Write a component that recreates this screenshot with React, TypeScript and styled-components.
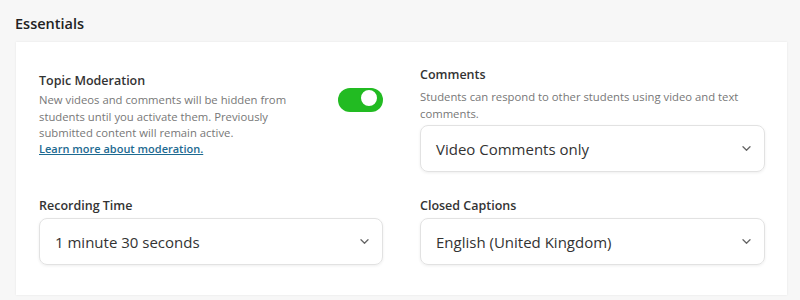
import React, { useState } from "react";
import styled, { createGlobalStyle } from "styled-components";

const GlobalStyle = createGlobalStyle`
  html, body {
    margin: 0;
    padding: 0;
    background: #f7f7f7;
    font-family: "Open Sans", "Liberation Sans", sans-serif;
  }
`;

const Page = styled.div`
  width: 800px;
  height: 300px;
  overflow: hidden;
  padding: 14px 0 0 15px;
  box-sizing: border-box;
`;

const SectionTitle = styled.h2`
  margin: 0 0 8px;
  font-size: 14.5px;
  font-weight: 600;
  color: #222;
  line-height: 20px;
`;

const Card = styled.div`
  width: 771px;
  margin-left: 1px;
  background: #fff;
  box-shadow: 0 0 2px rgba(0, 0, 0, 0.08);
  padding: 24px 22px 30px 23px;
  box-sizing: border-box;
  display: grid;
  grid-template-columns: 344px 345px;
  column-gap: 37px;
  row-gap: 25px;
`;

const Field = styled.div<{ $offset?: number }>`
  display: flex;
  flex-direction: column;
  padding-top: ${(p) => p.$offset ?? 0}px;
`;

const ToggleRow = styled.div`
  display: flex;
  align-items: flex-start;
  justify-content: space-between;
`;

const TextBlock = styled.div`
  width: 285px;
`;

const Label = styled.div`
  font-size: 12.5px;
  font-weight: 600;
  color: #333;
  line-height: 18px;
`;

const Description = styled.p<{ $top?: number }>`
  margin: ${(p) => p.$top ?? 2}px 0 0;
  font-size: 11.3px;
  line-height: 16.5px;
  color: #777;
`;

const HelpLink = styled.a`
  display: block;
  margin-top: -1px;
  font-size: 11px;
  font-weight: 600;
  line-height: 16px;
  color: #1d6a91;
  text-decoration: underline;
  cursor: pointer;
`;

const Switch = styled.button<{ $on: boolean }>`
  position: relative;
  margin-top: 16px;
  width: 45px;
  height: 24px;
  border-radius: 12px;
  border: none;
  padding: 0;
  background: ${(p) => (p.$on ? "#22bb22" : "#ccc")};
  cursor: pointer;

  &::after {
    content: "";
    position: absolute;
    top: 2px;
    left: ${(p) => (p.$on ? "23px" : "2px")};
    width: 16px;
    height: 16px;
    border-radius: 50%;
    background: #fff;
    border: 2px solid ${(p) => (p.$on ? "#22bb22" : "#ccc")};
    box-sizing: content-box;
    margin: -2px;
  }
`;

const SelectBox = styled.div<{ $top?: number }>`
  margin-top: ${(p) => p.$top ?? 3}px;
  height: 47px;
  border: 1px solid #e2e2e2;
  border-radius: 8px;
  box-shadow: 0 1px 3px rgba(0, 0, 0, 0.07);
  display: flex;
  align-items: center;
  justify-content: space-between;
  padding: 0 13px 0 15px;
  box-sizing: border-box;
  font-size: 15px;
  color: #333;
  cursor: pointer;
`;

const Chevron = () => (
  <svg width="9" height="5" viewBox="0 0 9 5" fill="none">
    <path d="M1 0.8l3.5 3.4 3.5-3.4" stroke="#666" strokeWidth="1.3" strokeLinecap="round" strokeLinejoin="round" />
  </svg>
);

const Select = ({ value, top }: { value: string; top?: number }) => (
  <SelectBox $top={top}>
    <span>{value}</span>
    <Chevron />
  </SelectBox>
);

export default function App() {
  const [moderation, setModeration] = useState(true);
  return (
    <>
      <GlobalStyle />
      <Page>
        <SectionTitle>Essentials</SectionTitle>
        <Card>
          <Field $offset={6}>
            <ToggleRow>
              <TextBlock>
                <Label>Topic Moderation</Label>
                <Description>
                  New videos and comments will be hidden from students until
                  you activate them. Previously submitted content will remain
                  active.
                </Description>
                <HelpLink>Learn more about moderation.</HelpLink>
              </TextBlock>
              <Switch $on={moderation} onClick={() => setModeration(!moderation)} />
            </ToggleRow>
          </Field>
          <Field>
            <Label>Comments</Label>
            <Description $top={5}>
              Students can respond to other students using video and text
              comments.
            </Description>
            <Select value="Video Comments only" top={3} />
          </Field>
          <Field>
            <Label>Recording Time</Label>
            <Select value="1 minute 30 seconds" />
          </Field>
          <Field>
            <Label>Closed Captions</Label>
            <Select value="English (United Kingdom)" />
          </Field>
        </Card>
      </Page>
    </>
  );
}
